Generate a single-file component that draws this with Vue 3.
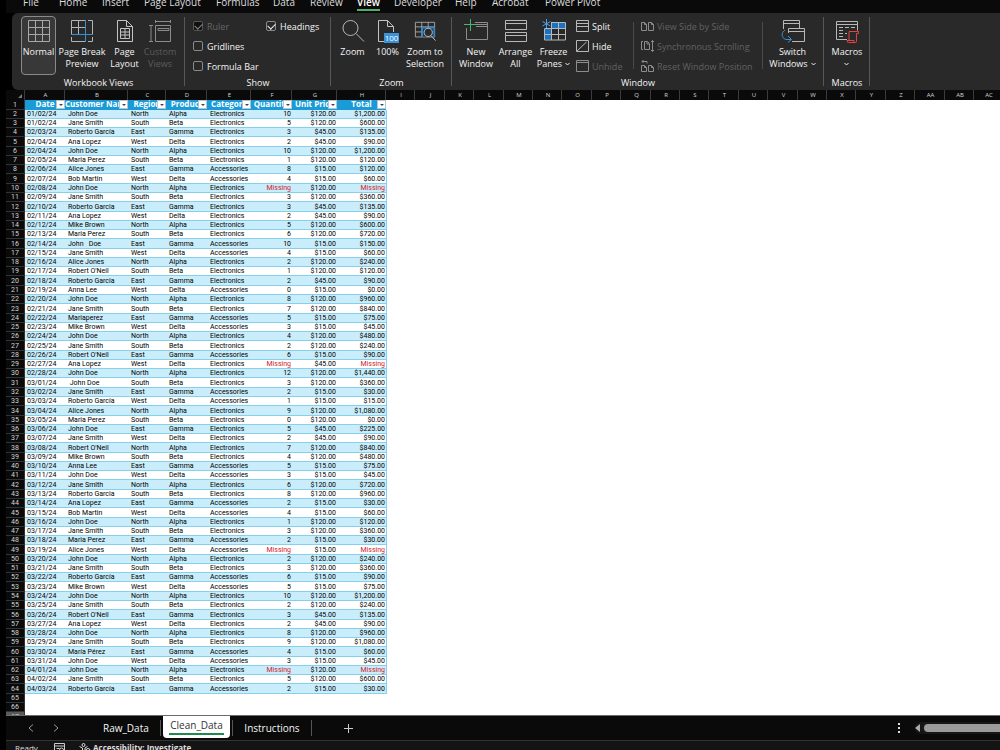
<script setup>
const menu = ['File', 'Home', 'Insert', 'Page Layout', 'Formulas', 'Data', 'Review', 'View', 'Developer', 'Help', 'Acrobat', 'Power Pivot']

const letters = ['A', 'B', 'C', 'D', 'E', 'F', 'G', 'H', 'I', 'J', 'K', 'L', 'M', 'N', 'O', 'P', 'Q', 'R', 'S', 'T', 'U', 'V', 'W', 'X', 'Y', 'Z', 'AA', 'AB', 'AC']
const fields = ['Date', 'Customer Name', 'Region', 'Product', 'Category', 'Quantity', 'Unit Price', 'Total']

const regions = ['North', 'South', 'East', 'West']
const products = ['Alpha', 'Beta', 'Gamma', 'Delta']

const orders = `01/02/24|John Doe|10|120
01/02/24|Jane Smith|5|120
02/03/24|Roberto García|3|45
02/04/24|Ana Lopez|2|45
02/04/24|John Doe|10|120
02/05/24|Maria Perez|1|120
02/06/24|Alice Jones|8|15
02/07/24|Bob Martin|4|15
02/08/24|John Doe||120
02/09/24|Jane Smith|3|120
02/10/24|Roberto Garcia|3|45
02/11/24|Ana Lopez|2|45
02/12/24|Mike Brown|5|120
02/13/24|Maria Perez|6|120
02/14/24|John   Doe|10|15
02/15/24|Jane Smith|4|15
02/16/24|Alice Jones|2|120
02/17/24|Robert O'Neil|1|120
02/18/24|Roberto Garcia|2|45
02/19/24|Anna Lee|0|15
02/20/24|John Doe|8|120
02/21/24|Jane Smith|7|120
02/22/24|Mariaperez|5|15
02/23/24|Mike Brown|3|15
02/24/24|John Doe|4|120
02/25/24|Jane Smith|2|120
02/26/24|Robert O'Neil|6|15
02/27/24|Ana Lopez||45
02/28/24|John Doe|12|120
03/01/24| John Doe|3|120
03/02/24|Jane Smith|2|15
03/03/24|Roberto García|1|15
03/04/24|Alice Jones|9|120
03/05/24|Maria Perez|0|120
03/06/24|John Doe|5|45
03/07/24|Jane Smith|2|45
03/08/24|Robert O'Neil|7|120
03/09/24|Mike Brown|4|120
03/10/24|Anna Lee|5|15
03/11/24|John Doe|3|15
03/12/24|Jane Smith|6|120
03/13/24|Roberto Garcia|8|120
03/14/24|Ana Lopez|2|15
03/15/24|Bob Martin|4|15
03/16/24|John Doe|1|120
03/17/24|Jane Smith|3|120
03/18/24|Maria Perez|2|15
03/19/24|Alice Jones||15
03/20/24|John Doe|2|120
03/21/24|Jane Smith|3|120
03/22/24|Roberto García|6|15
03/23/24|Mike Brown|5|15
03/24/24|John Doe|10|120
03/25/24|Jane Smith|2|120
03/26/24|Robert O'Neil|3|45
03/27/24|Ana Lopez|2|45
03/28/24|John Doe|8|120
03/29/24|Jane Smith|9|120
03/30/24|María Pérez|4|15
03/31/24|John Doe|3|15
04/01/24|John Doe||120
04/02/24|Jane Smith|5|120
04/03/24|Roberto García|2|15`

const money = (n) => '$' + n.toLocaleString('en-US', { minimumFractionDigits: 2 })

const rows = orders.split('\n').map((line, i) => {
  const [date, name, qty, price] = line.split('|')
  return {
    date,
    name,
    region: regions[i % 4],
    product: products[i % 4],
    category: price === '15' ? 'Accessories' : 'Electronics',
    missing: qty === '',
    qty: qty || 'Missing',
    price: money(+price),
    total: qty === '' ? 'Missing' : money(qty * price),
  }
})
</script>

<template>
  <div class="app">
    <nav class="menu">
      <a v-for="m in menu" :key="m" href="#" :class="{ active: m === 'View' }">{{ m }}</a>
    </nav>

    <div class="ribbon">
      <section class="group g-views">
        <div class="body">
          <button class="big selected">
            <svg width="22" height="22" viewBox="0 0 22 22" fill="none" stroke="#a8a8a8"><path d="M.5.5h21v21H.5zM7.5.5v21M14.5.5v21M.5 7.5h21M.5 14.5h21" /></svg>
            <span>Normal</span>
          </button>
          <button class="big">
            <svg width="22" height="22" viewBox="0 0 22 22" fill="none" stroke="#b4b4b4"><path d="M14 .5H.5V14M7.5.5V14M.5 7.5H14M17 .5h4.5V14M.5 17v4.5H14M17 21.5h4.5V17" /><path d="M14.5 0v22M0 14.5h22" stroke="#3a8fd0" /></svg>
            <span>Page Break<br>Preview</span>
          </button>
          <button class="big">
            <svg width="22" height="22" viewBox="0 0 22 22" fill="none" stroke="#c4c4c4"><path d="M3.500.5h9l6 6v15h-15zM12.500.5v6h6M6.500 8.500h9v10h-9zM6.500 12h9M6.500 15h9M11 8.500v10" /></svg>
            <span>Page<br>Layout</span>
          </button>
          <button class="big" disabled>
            <svg width="22" height="22" viewBox="0 0 22 22" fill="none" stroke="#8c8c8c"><path d="M6 1.500h16M6.500 0v3M21.500 0v3M2 5.500v16M0 5.500h4M0 21.500h4M6.500 21.500v-16h15v16zM9 8.500h11v2H9z" /></svg>
            <span>Custom<br>Views</span>
          </button>
        </div>
        <h2>Workbook Views</h2>
      </section>

      <section class="group g-show">
        <div class="body checks">
          <label class="off"><input type="checkbox" checked disabled>Ruler</label>
          <label><input type="checkbox" checked>Headings</label>
          <label><input type="checkbox">Gridlines</label>
          <label class="wide"><input type="checkbox">Formula Bar</label>
        </div>
        <h2>Show</h2>
      </section>

      <section class="group g-zoom">
        <div class="body">
          <button class="big">
            <svg width="24" height="22" viewBox="0 0 24 22" fill="none" stroke="#b8b8b8"><circle cx="9.500" cy="8" r="7.500" /><path d="M15 13.500l8 8" /></svg>
            <span>Zoom</span>
          </button>
          <button class="big">
            <svg width="24" height="22" viewBox="0 0 24 22" fill="none" stroke="#c4c4c4"><path d="M8 21.500H2.500V.5h9l6 6V12M11.500.5v6h6" /><path d="M8 13h15v10H8z" fill="#3a93d8" stroke="none" /><text x="15.500" y="21" font-size="8" text-anchor="middle" fill="#fff" stroke="none">100</text></svg>
            <span>100%</span>
          </button>
          <button class="big">
            <svg width="24" height="24" viewBox="0 0 24 24" fill="none" stroke="#a8a8a8"><path d="M1.500 2.500h21v16h-21zM1.500 7.500h21M1.500 13h21M8.500 2.500v16M15.500 2.500v16" /><path d="M9 18V8.500h13V18" fill="#123d63" stroke="#2f86cc" stroke-width="1.500" /><circle cx="15.500" cy="13.500" r="4.500" fill="#292929" stroke="#c8c8c8" /><path d="M18.500 17l5 5.500" stroke="#c8c8c8" /></svg>
            <span>Zoom to<br>Selection</span>
          </button>
        </div>
        <h2>Zoom</h2>
      </section>

      <section class="group g-window">
        <div class="body">
          <button class="big">
            <svg width="24" height="22" viewBox="0 0 24 22" fill="none" stroke="#8c8c8c"><path d="M2.500 8v11.500h21v-17H11M12 6.500h11.500M12 4.500h11.500" /><path d="M6.500-1v12M0 4.500h13" stroke="#4fb36c" /></svg>
            <span>New<br>Window</span>
          </button>
          <button class="big">
            <svg width="22" height="22" viewBox="0 0 22 22" fill="none" stroke="#b8b8b8"><path d="M.5.5h21v9H.5zM.5 3.500h21M.5 12.500h21v9H.5zM.5 15.500h21" /></svg>
            <span>Arrange<br>All</span>
          </button>
          <button class="big">
            <svg width="24" height="22" viewBox="0 0 24 22" fill="none"><path d="M9 2.500h14v6H9zM2 8.500h7v11H2z" fill="#1a72c4" /><path d="M9 2.500h14.500V20H2.500V9M2.500 8.500h21M2.500 14.500h21M9.500 2.500V20M16.500 2.500V20" stroke="#b8b8b8" /><path d="M4.500-1v9M.5 1.500l8 4.500M.5 6l8-4.500" stroke="#4aa3e6" /></svg>
            <span>Freeze<br>Panes<svg class="chev" width="5" height="4" viewBox="0 0 5 4" fill="none" stroke="#eee"><path d="M.5 1l2 2 2-2" /></svg></span>
          </button>
          <div class="smalls">
            <button><svg width="13" height="12" viewBox="0 0 13 12" fill="none" stroke="#b8b8b8"><path d="M.5.5h12v11H.5zM.5 3.500h12M.5 6.500h12" /></svg>Split</button>
            <button><svg width="13" height="12" viewBox="0 0 13 12" fill="none" stroke="#b8b8b8"><path d="M.5.5h12v11H.5zM1 11L10.500 2" /></svg>Hide</button>
            <button disabled><svg width="13" height="12" viewBox="0 0 13 12" fill="none" stroke="#8c8c8c"><path d="M.5.5h12v11H.5zM.5 2.500h12" /></svg>Unhide</button>
          </div>
          <div class="smalls mid">
            <button disabled><svg width="13" height="12" viewBox="0 0 13 12" fill="none" stroke="#8c8c8c"><path d="M.5 2.500h3l2 2v6h-5zM3.500 2.500v2h2M7.500 2.500h3l2 2v6h-5zM10.500 2.500v2h2" /></svg>View Side by Side</button>
            <button disabled><svg width="13" height="12" viewBox="0 0 13 12" fill="none" stroke="#8c8c8c"><path d="M2 1.500H.5v8H2M3.500 1.500h3l2 2v6h-5zM6 1.500v2.500h2.500M11.500.5v11M10 2L11.500.5 13 2M10 10l1.500 1.500L13 10" /></svg>Synchronous Scrolling</button>
            <button disabled><svg width="13" height="12" viewBox="0 0 13 12" fill="none" stroke="#8c8c8c"><path d="M.5 5.500h3l2 2v4h-5zM3.500 5.500v2h2M7.500 5.500h3l2 2v4h-5zM10.500 5.500v2h2M6 3.500V1.500H1M2.500 0L1 1.500 2.500 3" /></svg>Reset Window Position</button>
          </div>
          <button class="big">
            <svg width="24" height="22" viewBox="0 0 24 22" fill="none" stroke="#b8b8b8"><path d="M2.500 9V.5h16V8M2.500 3.500h16M7.500 13V8.500h16v13H11M7.500 11.500h16" /><path d="M4 10c-4 2.500-4 8 1 9.500h5M7 16l3.500 3.500L7 22.500" stroke="#3a8fd0" /></svg>
            <span>Switch<br>Windows<svg class="chev" width="5" height="4" viewBox="0 0 5 4" fill="none" stroke="#eee"><path d="M.5 1l2 2 2-2" /></svg></span>
          </button>
        </div>
        <h2>Window</h2>
      </section>

      <section class="group g-macros">
        <div class="body">
          <button class="big">
            <svg width="24" height="22" viewBox="0 0 24 22" fill="none" stroke="#b8b8b8"><path d="M12 19.500H1.500v-18h21v9M1.500 4.500h21M4 7.500h4M10 7.500h4M4 10.500h4M4 13.500h4M10 13.500h2M4 16.500h4M16 7.500h4" /><path d="M14 20V11.500h9.500v2h-2v8q0 1-1 1H13.500q-1.500 0-1.500-2h7v2" stroke="#e0443e" /></svg>
            <span>Macros<br><svg class="chev alone" width="5" height="4" viewBox="0 0 5 4" fill="none" stroke="#eee"><path d="M.5 1l2 2 2-2" /></svg></span>
          </button>
        </div>
        <h2>Macros</h2>
      </section>
    </div>

    <main class="sheet">
      <table>
        <colgroup>
          <col class="w-head"><col class="w-a"><col class="w-b"><col class="w-c"><col class="w-d"><col class="w-e"><col class="w-f"><col class="w-g"><col class="w-h">
          <col v-for="n in 21" :key="n" :class="n % 5 === 2 || n % 5 === 4 ? 'w-wide' : 'w-std'">
        </colgroup>
        <thead>
          <tr>
            <th class="corner"><svg width="4" height="4" viewBox="0 0 4 4"><path d="M4 0v4H0z" fill="#777" /></svg></th>
            <th v-for="l in letters" :key="l" scope="col">{{ l }}</th>
          </tr>
        </thead>
        <tbody>
          <tr class="fields">
            <th scope="row">1</th>
            <td v-for="f in fields" :key="f">
              <div class="field"><span>{{ f }}</span></div>
              <button class="filter" :aria-label="'Filter ' + f"><svg width="4" height="2" viewBox="0 0 4 2"><path d="M0 0h4L2 2z" fill="#444" /></svg></button>
            </td>
            <td class="blank" colspan="21"></td>
          </tr>
          <tr v-for="(r, i) in rows" :key="i" class="order">
            <th scope="row">{{ i + 2 }}</th>
            <td class="date">{{ r.date }}</td>
            <td>{{ r.name }}</td>
            <td>{{ r.region }}</td>
            <td>{{ r.product }}</td>
            <td>{{ r.category }}</td>
            <td class="num" :class="{ missing: r.missing }">{{ r.qty }}</td>
            <td class="num">{{ r.price }}</td>
            <td class="num" :class="{ missing: r.missing }">{{ r.total }}</td>
            <td class="blank" colspan="21"></td>
          </tr>
          <tr v-for="n in [65, 66, 67]" :key="n" :class="{ current: n === 67 }">
            <th scope="row">{{ n }}</th>
            <td class="blank" colspan="29"></td>
          </tr>
        </tbody>
      </table>
    </main>

    <div class="tabs">
      <button class="arrow" aria-label="Previous sheet"><svg width="6" height="8" viewBox="0 0 6 8" fill="none" stroke="#999"><path d="M5 .5L1 4l4 3.500" /></svg></button>
      <button class="arrow" aria-label="Next sheet"><svg width="6" height="8" viewBox="0 0 6 8" fill="none" stroke="#999"><path d="M1 .5L5 4 1 7.500" /></svg></button>
      <button class="tab first">Raw_Data</button>
      <button class="tab on"><span>Clean_Data</span></button>
      <button class="tab last">Instructions</button>
      <button class="plus" aria-label="New sheet"><svg width="9" height="9" viewBox="0 0 9 9" stroke="#ccc"><path d="M4.500 0v9M0 4.500h9" /></svg></button>
      <svg class="dots" width="2" height="10" viewBox="0 0 2 10" fill="#ddd"><path d="M0 0h2v2H0zM0 4h2v2H0zM0 8h2v2H0z" /></svg>
      <div class="scroll">
        <svg width="5" height="8" viewBox="0 0 5 8"><path d="M5 0v8L0 4z" fill="#aaa" /></svg>
        <div class="thumb"></div>
      </div>
    </div>

    <footer class="status">
      <span class="ready">Ready</span>
      <svg class="rec" width="11" height="11" viewBox="0 0 11 11" fill="none" stroke="#ccc"><path d="M.5.5h10v10H.5zM.5 3h10M2.500 5.500h3M2.500 7.500h3" /><circle cx="7.500" cy="7" r="2" /></svg>
      <svg class="acc" width="12" height="12" viewBox="0 0 12 12" fill="none" stroke="#ddd"><circle cx="4.500" cy="2" r="1.500" /><path d="M.5 3.500l3 1.500v3l-1.500 4M8.500 3.500L6 5v2" /><circle cx="9" cy="7.500" r="2" /></svg>
      <b>Accessibility: Investigate</b>
    </footer>
  </div>
</template>

<style>
body { background: #000; }
</style>

<style scoped>
* { box-sizing: border-box; }
.app {
  display: flex;
  flex-direction: column;
  height: 100vh;
  padding-left: 6px;
  overflow: hidden;
  background: #000;
  color: #f4f4f4;
  font-family: "Open Sans", "Noto Sans", sans-serif;
  font-size: 9px;
}
button { margin: 0; padding: 0; border: 0; background: none; color: inherit; font: inherit; }
button:disabled { color: #626262; }
svg { display: block; flex: none; overflow: visible; }

.menu {
  display: grid;
  grid-template-columns: 36px 43px 42px 72px 57px 37px 47px 37px 61px 37px 53px auto;
  align-content: end;
  flex: none;
  height: 13px;
  padding: 0 0 2px 17px;
  overflow: hidden;
  background: #0a0a0a;
}
.menu a {
  justify-self: start;
  border-bottom: 2px solid transparent;
  color: #ddd;
  font-size: 10px;
  line-height: 14px;
  text-decoration: none;
  white-space: nowrap;
}
.menu .active { border-color: #4fae72; color: #fff; font-weight: 600; }

.ribbon {
  display: flex;
  flex: none;
  height: 77px;
  margin-left: 6px;
  border-radius: 6px 0 0 6px;
  background: #292929;
}
.group { position: relative; flex: none; padding-top: 3px; }
.group::after { content: ""; position: absolute; top: 4px; right: 0; bottom: 4px; width: 1px; background: #575757; }
.group h2 { margin: 0; font-size: 9px; font-weight: 400; line-height: 12px; text-align: center; }
.body { display: grid; height: 61px; }
.g-views { width: 173px; }
.g-views .body { padding-left: 9px; grid-template-columns: 35px 52px 33px 38px; }
.g-show { width: 146px; }
.g-zoom { width: 121px; }
.g-zoom .body { padding-left: 4px; grid-template-columns: 35px 35px 40px; }
.g-window { width: 372px; }
.g-window .body { padding-left: 4px; grid-template-columns: 40px 39px 37px 65px 129px 53px; }
.g-macros { width: 46px; }
.g-macros .body { justify-content: center; }

.big {
  display: flex;
  flex-direction: column;
  align-items: center;
  height: 59px;
  padding-top: 3px;
  border: 1px solid transparent;
  border-radius: 4px;
}
.big > svg { height: 22px; }
.big span { margin-top: 4px; line-height: 12px; white-space: nowrap; }
.big.selected { border-color: #8a8a8a; background: #383838; }
.big:disabled { color: #5c5c5c; }
.chev { display: inline-block; margin-left: 3px; vertical-align: 1px; }
.chev.alone { margin-left: 0; }

.checks { grid-template-columns: 73px 65px; grid-template-rows: 20px 20px 20px; padding-left: 8px; }
.checks label { display: flex; align-items: center; gap: 4px; white-space: nowrap; }
.checks label:nth-child(3) { grid-column: 1; }
.checks .wide { grid-column: 1 / 3; }
.checks .off { color: #666; }
.checks input {
  appearance: none;
  position: relative;
  width: 10px;
  height: 10px;
  margin: 0;
  border: 1px solid #8a8a8a;
  border-radius: 2px;
}
.checks input:checked::after {
  content: "";
  position: absolute;
  top: 1px;
  left: 1px;
  width: 6px;
  height: 4px;
  border: solid #eee;
  border-width: 0 0 1px 1px;
  transform: rotate(-45deg);
}
.checks .off input { border-color: #555; background: #111; }
.checks .off input::after { border-color: #888; }

.smalls { display: grid; grid-template-rows: 20px 20px 20px; padding-left: 4px; position: relative; }
.smalls button { display: flex; align-items: center; gap: 3px; white-space: nowrap; }
.smalls::after { content: ""; position: absolute; top: 6px; right: 3px; bottom: 8px; width: 1px; background: #4a4a4a; }

.sheet { flex: 1; min-height: 0; overflow: hidden; background: #fff; }
table { width: 997px; border-collapse: separate; border-spacing: 0; table-layout: fixed; }
.w-head { width: 19px; }
.w-a { width: 40px; }
.w-b { width: 63px; }
.w-c { width: 38px; }
.w-d { width: 41px; }
.w-e { width: 44px; }
.w-f { width: 41px; }
.w-g { width: 45px; }
.w-h { width: 49px; }
.w-std { width: 29px; }
.w-wide { width: 30px; }
th, td { height: 9px; padding: 0; overflow: hidden; line-height: 8px; white-space: pre; }
th { background: #0a0a0a; color: #d4d4d4; font-size: 6px; font-weight: 400; text-align: center; }
thead th { height: 10px; padding-left: 2px; border-right: 1px solid #3c3c3c; }
.corner svg { margin: 2px 2px 0 auto; }
tbody th { border-bottom: 1px solid #333; border-right: 1px solid #333; font-family: Roboto, sans-serif; font-size: 7px; }
tbody tr:nth-child(11n + 1) > *,
tbody tr:nth-child(11n + 5) > *,
tbody tr:nth-child(11n + 9) > * { height: 10px; }
.current th { background: #5a5a5a; }

.order td {
  padding-left: 3px;
  border-bottom: 1px solid #86d0ea;
  color: #000;
  font-family: Roboto, "Noto Sans", sans-serif;
  font-size: 7px;
}
.order:nth-child(even) td { background: #caedfb; }
.order .date { padding-left: 2px; }
.order .num { padding: 0 1px 0 0; text-align: right; }
.order .missing { color: #d3202c; }
.order .blank, .order:nth-child(even) .blank { border: 0; border-left: 1px solid #86d0ea; background: #fff; }

.fields td { position: relative; background: #1a9bd7; color: #fff; font-size: 8px; font-weight: 700; vertical-align: top; }
.fields .blank { background: #fff; }
.field { display: flex; justify-content: safe center; }
.filter {
  position: absolute;
  top: 0;
  right: 0;
  display: flex;
  align-items: center;
  justify-content: center;
  width: 9px;
  height: 9px;
  border: 1px solid #b8c4cc;
  background: #fff;
}

.tabs {
  display: flex;
  flex: none;
  align-items: center;
  height: 25px;
  padding-left: 21px;
  border-top: 1px solid #6a6a6a;
  background: #0a0a0a;
  font-size: 10px;
}
.arrow { display: grid; place-items: center; width: 8px; height: 16px; margin-right: 17px; }
.tab { height: 16px; line-height: 16px; border-right: 1px solid #555; white-space: nowrap; }
.tab.first { width: 84px; padding-left: 26px; text-align: left; }
.tab.on {
  display: flex;
  align-items: flex-start;
  align-self: flex-start;
  width: 67px;
  height: 22px;
  margin: 0 2px;
  padding: 0 6px;
  border: 0;
  border-radius: 0 0 4px 4px;
  background: #fff;
  color: #333;
}
.tab.on span { flex: 1; height: 19px; border-bottom: 2px solid #1f8a50; line-height: 18px; }
.tab.last { width: 80px; border-left: 1px solid #555; }
.plus { display: grid; place-items: center; width: 9px; height: 16px; margin-left: 32px; }
.dots { margin-left: auto; }
.scroll { display: flex; align-items: center; gap: 4px; width: 85px; height: 12px; margin-left: 15px; border-radius: 6px 0 0 6px; background: #161616; }
.thumb { flex: 1; height: 8px; border-radius: 4px 0 0 4px; background: #9a9a9a; }

.status {
  display: flex;
  flex: none;
  align-items: flex-start;
  height: 10px;
  padding: 1px 0 0 9px;
  overflow: hidden;
  border-top: 1px solid #333;
  background: #141414;
  color: #ddd;
  font-size: 8px;
  line-height: 12px;
}
.ready { width: 39px; }
.rec { margin: 1px 14px 0 0; }
.acc { margin: 1px 2px 0 0; }
</style>
